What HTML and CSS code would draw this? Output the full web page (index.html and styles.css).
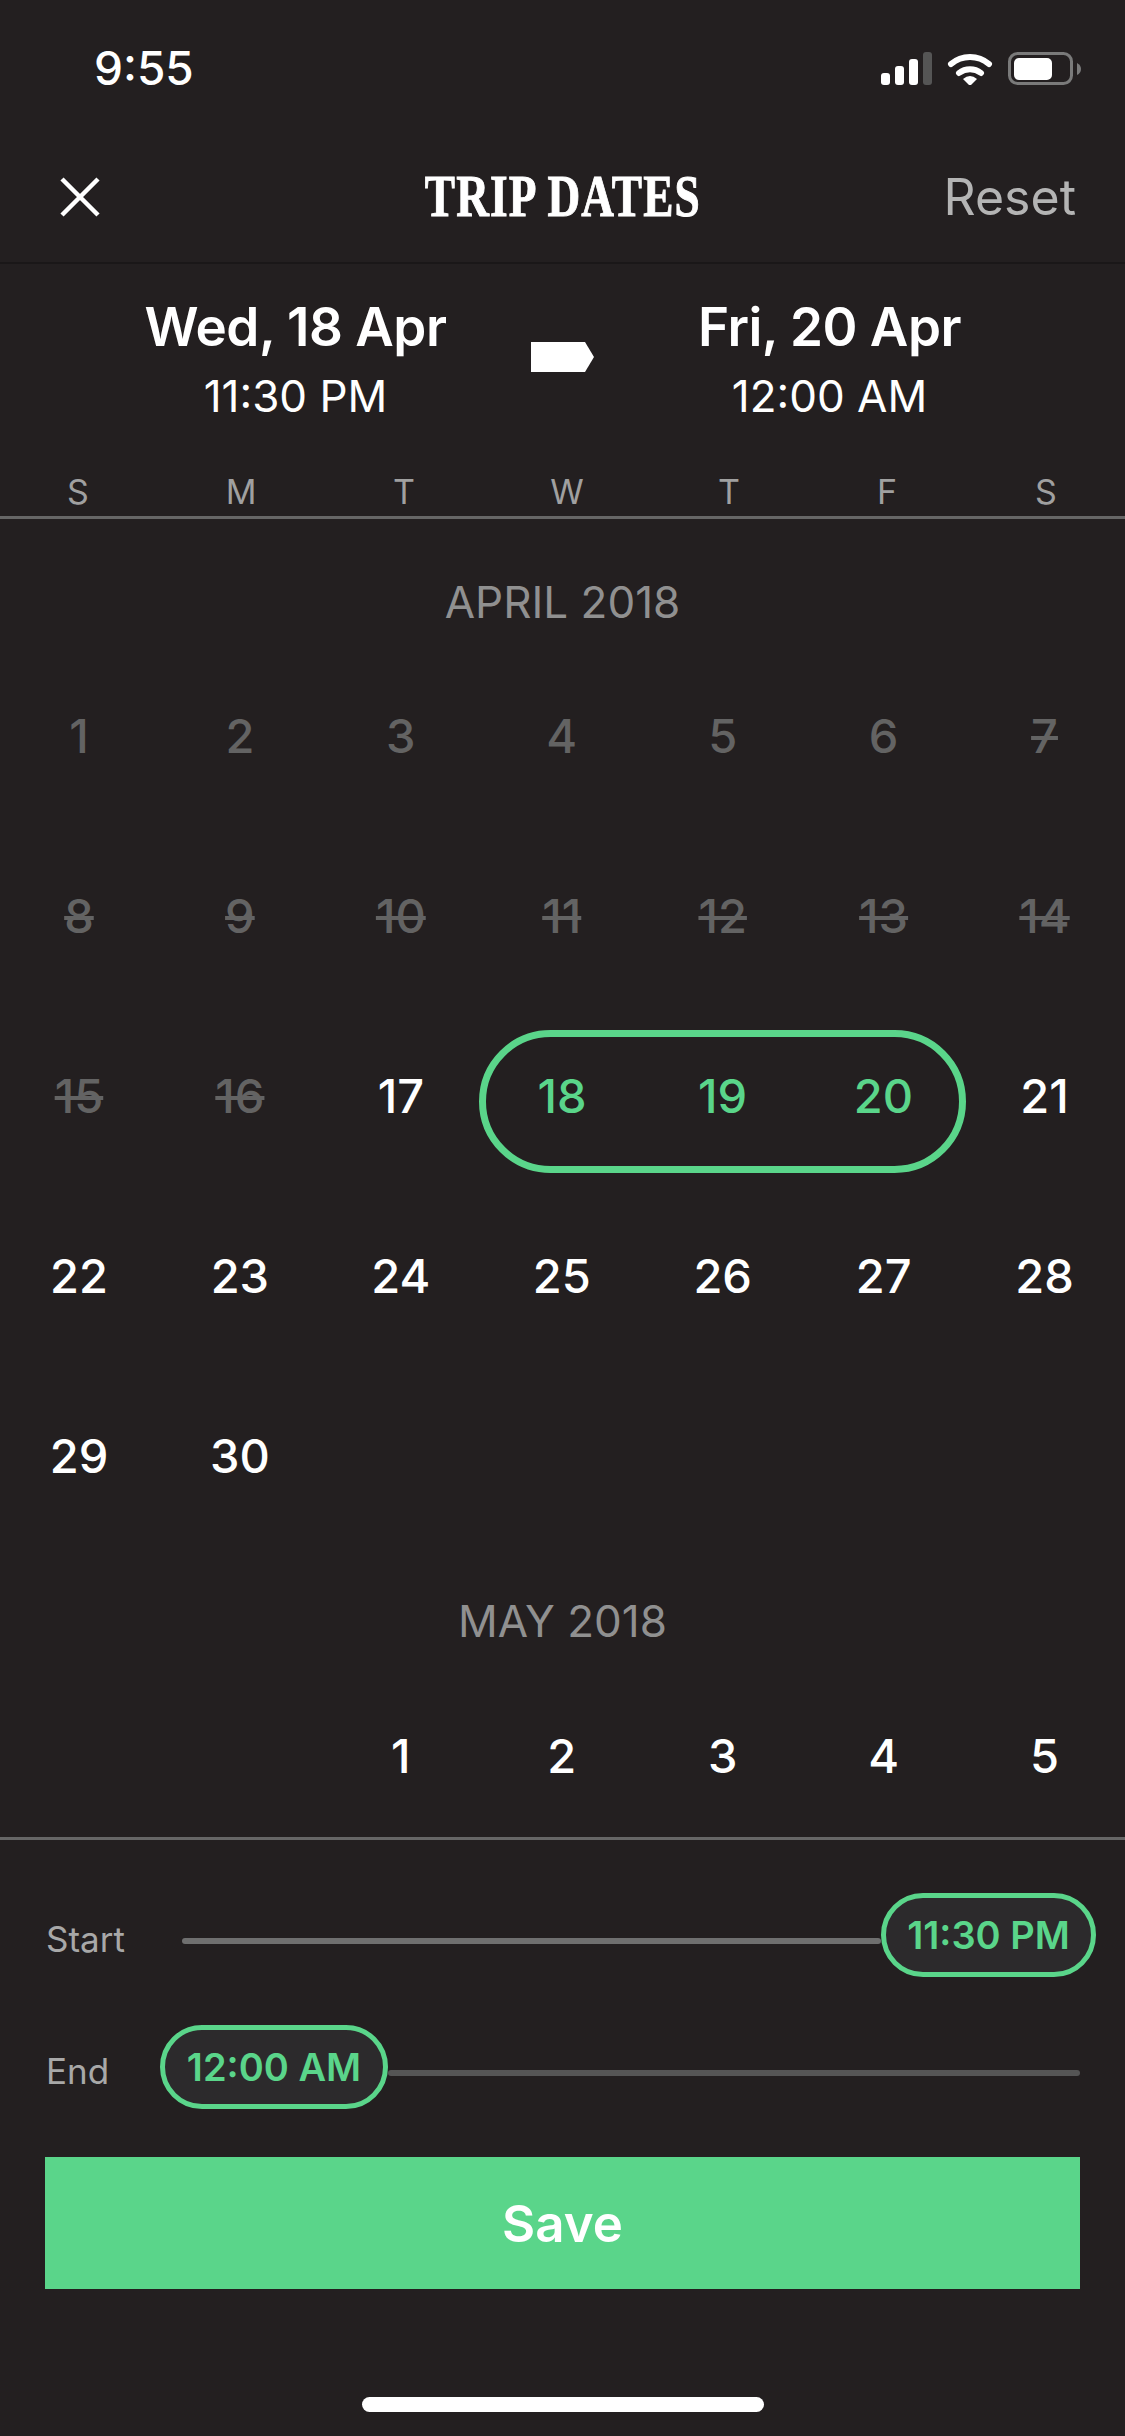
FILE: index.html
```html
<!DOCTYPE html>
<html lang="en">
<head>
  <meta charset="UTF-8" />
  <meta name="viewport" content="width=device-width, initial-scale=1.0"/>
  <title>Trip Dates</title>
  <link rel="stylesheet" href="styles.css">
</head>
<body>
  <div class="status-bar">
    <div class="clock">9:55</div>
    <svg class="status-icons" width="200" height="33" viewBox="0 0 200 33">
      <rect x="0" y="21" width="9" height="12" rx="3" fill="#fff"/>
      <rect x="14" y="14" width="9" height="19" rx="3" fill="#fff"/>
      <rect x="28" y="7" width="9" height="26" rx="3" fill="#fff"/>
      <rect x="42" y="0" width="9" height="33" rx="3" fill="#555"/>
      <path d="M70 12 A29 29 0 0 1 108 12" fill="none" stroke="#fff" stroke-width="6" stroke-linecap="round"/>
      <path d="M78 21 A18 18 0 0 1 100 21" fill="none" stroke="#fff" stroke-width="6" stroke-linecap="round"/>
      <path d="M82 27 Q89 21 96 27 L89 34 Z" fill="#fff"/>
      <rect x="128.5" y="1.500" width="62" height="30" rx="8" fill="none" stroke="#7a7a7a" stroke-width="3"/>
      <rect x="133" y="6" width="38" height="22" rx="5" fill="#fff"/>
      <path d="M196 11 Q200 13 200 17 Q200 21 196 23 Z" fill="#7a7a7a"/>
    </svg>
  </div>

  <div class="nav">
    <svg class="close" width="40" height="40" viewBox="0 0 40 40">
      <path d="M2 2 L38 38 M38 2 L2 38" stroke="#fff" stroke-width="4.500" fill="none"/>
    </svg>
    <div class="title"><span>TRIP DATES</span></div>
    <div class="reset">Reset</div>
  </div>

  <div class="summary">
    <div class="when">
      <div class="when-date">Wed, 18 Apr</div>
      <div class="when-time">11:30 PM</div>
    </div>
    <svg class="arrow" width="63" height="30" viewBox="0 0 63 30">
      <path d="M0 0 H54 L63 15 L54 30 H0 Z" fill="#fff"/>
    </svg>
    <div class="when">
      <div class="when-date">Fri, 20 Apr</div>
      <div class="when-time">12:00 AM</div>
    </div>
  </div>

  <div class="weekdays">
    <div>S</div><div>M</div><div>T</div><div>W</div><div>T</div><div>F</div><div>S</div>
  </div>

  <div class="calendar">
    <div class="month">APRIL 2018</div>
    <div class="days">
      <div class="day past">1</div>
      <div class="day past">2</div>
      <div class="day past">3</div>
      <div class="day past">4</div>
      <div class="day past">5</div>
      <div class="day past">6</div>
      <div class="day past off">7</div>
      <div class="day past off">8</div>
      <div class="day past off">9</div>
      <div class="day past off">10</div>
      <div class="day past off">11</div>
      <div class="day past off">12</div>
      <div class="day past off">13</div>
      <div class="day past off">14</div>
      <div class="day past off">15</div>
      <div class="day past off">16</div>
      <div class="day">17</div>
      <div class="range">
        <div class="day">18</div>
        <div class="day">19</div>
        <div class="day">20</div>
      </div>
      <div class="day">21</div>
      <div class="day">22</div>
      <div class="day">23</div>
      <div class="day">24</div>
      <div class="day">25</div>
      <div class="day">26</div>
      <div class="day">27</div>
      <div class="day">28</div>
      <div class="day">29</div>
      <div class="day">30</div>
    </div>
    <div class="month month-may">MAY 2018</div>
    <div class="days days-may">
      <div></div>
      <div></div>
      <div class="day">1</div>
      <div class="day">2</div>
      <div class="day">3</div>
      <div class="day">4</div>
      <div class="day">5</div>
    </div>
  </div>

  <div class="footer">
    <div class="slider slider-start">
      <div class="slider-label">Start</div>
      <div class="track"></div>
      <div class="pill">11:30 PM</div>
    </div>
    <div class="slider slider-end">
      <div class="slider-label">End</div>
      <div class="pill">12:00 AM</div>
      <div class="track"></div>
    </div>
    <button class="save">Save</button>
    <div class="home-bar"></div>
  </div>
</body>
</html>
```

FILE: styles.css
```css
body {
  margin: 0;
  padding: 0;
  width: 1125px;
  height: 2436px;
  overflow: hidden;
  background-color: #231f20;
  color: #fff;
  font-family: Inter, "Noto Sans", sans-serif;
}

.status-bar {
  height: 136px;
  box-sizing: border-box;
  padding: 0 44px 0 94px;
  display: flex;
  justify-content: space-between;
  align-items: center;
}

.clock {
  font-size: 46px;
  font-weight: 500;
}

.status-icons {
  display: block;
}

.nav {
  height: 128px;
  box-sizing: border-box;
  border-bottom: 2px solid #1a1718;
  padding: 0 49px 5px 60px;
  display: flex;
  align-items: center;
  justify-content: space-between;
  position: relative;
}

.title {
  position: absolute;
  left: 0;
  right: 0;
  text-align: center;
  font-family: "Liberation Serif", serif;
  font-weight: 700;
  font-size: 60px;
  letter-spacing: 1.5px;
  -webkit-text-stroke: 1px #fff;
}

.title span {
  display: inline-block;
  transform: scaleX(0.755);
}

.reset {
  font-size: 50px;
  color: #b4b4b4;
}

.summary {
  height: 192px;
  box-sizing: border-box;
  padding-bottom: 3px;
  display: grid;
  grid-template-columns: 1fr 63px 1fr;
  align-items: center;
}

.arrow {
  margin-bottom: 3px;
}

.when {
  text-align: center;
}

.when:first-child {
  padding-left: 60px;
}

.when:last-child {
  padding-right: 60px;
}

.when-date {
  font-size: 53px;
  font-weight: 600;
  letter-spacing: -0.5px;
}

.when-time {
  font-size: 44px;
  margin-top: 10px;
}

/* header letters don't sit quite on the day columns in the design */
.weekdays {
  display: grid;
  grid-template-columns: 162px 164px 162px 164px 160px 156px 162px;
  margin-left: -3px;
  height: 63px;
  line-height: 72px;
  box-sizing: border-box;
  border-bottom: 3px solid #666;
  text-align: center;
  font-size: 34px;
  color: #a0a0a0;
}

.calendar {
  height: 1321px;
  box-sizing: border-box;
  padding-top: 55px;
  border-bottom: 3px solid #666;
}

.month {
  height: 56px;
  line-height: 56px;
  text-align: center;
  font-size: 44px;
  color: #909090;
}

.month-may {
  margin-top: 48px;
}

.days {
  display: grid;
  grid-template-columns: repeat(7, 1fr);
  grid-auto-rows: 180px;
  margin: 15px 0 0 -1.5px;
}

.days-may {
  margin-top: 36px;
  grid-auto-rows: 140px;
}

.day {
  display: flex;
  align-items: center;
  justify-content: center;
  font-size: 47px;
  font-weight: 450;
}

.past {
  color: #636363;
}

.off {
  text-decoration: line-through;
  text-decoration-thickness: 4px;
}

.range {
  grid-column: span 3;
  display: grid;
  grid-template-columns: repeat(3, 160.7px);
  justify-content: center;
  height: 143px;
  align-self: center;
  box-sizing: border-box;
  margin: 12px -2px 0;
  padding-bottom: 12px;
  border: 7px solid #5ad58a;
  border-radius: 72px;
  color: #5ad58a;
}

.footer {
  padding-top: 53px;
}

.slider {
  display: flex;
  align-items: center;
  height: 84px;
  box-sizing: border-box;
  padding-left: 46px;
  margin-bottom: 48px;
}

.slider-start {
  padding-right: 29px;
}

.slider-end {
  padding-right: 45px;
}

.slider-label {
  font-size: 35px;
  color: #a8a8a8;
  margin-top: 8px;
}

.slider-start .slider-label {
  width: 136px;
}

.slider-end .slider-label {
  width: 114px;
}

.track {
  flex: 1;
  height: 6px;
  margin-top: 12px;
  background: #6f6f6f;
  border-radius: 3px;
}

.slider-end .track {
  background: #555;
}

.pill {
  height: 84px;
  box-sizing: border-box;
  border: 5px solid #5ad58a;
  border-radius: 42px;
  background: #2c2a2c;
  color: #5ad58a;
  font-size: 38px;
  font-weight: 600;
  line-height: 74px;
  text-align: center;
}

.slider-start .pill {
  width: 215px;
}

.slider-end .pill {
  width: 228px;
}

.save {
  display: block;
  width: 1035px;
  height: 132px;
  margin: 0 0 0 45px;
  padding: 0;
  border: none;
  background-color: #5ad58a;
  color: #fff;
  font-family: inherit;
  font-size: 51px;
  font-weight: 600;
}

.home-bar {
  width: 402px;
  height: 15px;
  margin: 108px auto 0;
  border-radius: 8px;
  background: #fff;
}
```
